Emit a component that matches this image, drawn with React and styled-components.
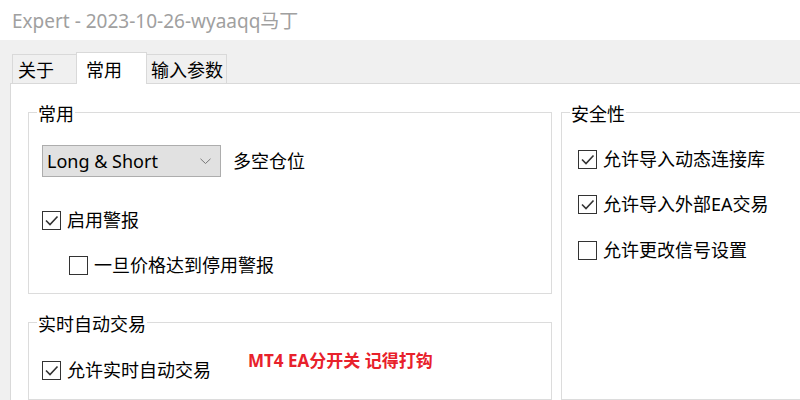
import React from "react";
import styled, { createGlobalStyle } from "styled-components";

const GlobalStyle = createGlobalStyle`
  html, body { margin: 0; padding: 0; background: #fff; }
  body {
    font-family: "Noto Sans", "Noto Sans CJK SC", sans-serif;
    color: #000;
  }
  * { box-sizing: border-box; }
`;

const Window = styled.div`
  width: 800px;
  height: 400px;
  overflow: hidden;
  display: flex;
  flex-direction: column;
  background: #fff;
`;

const TitleBar = styled.div`
  height: 40px;
  flex: none;
  display: flex;
  align-items: center;
  padding-left: 12px;
  font-size: 19px;
  color: #a0a0a0;
  font-family: "Noto Sans", "Noto Sans CJK SC", sans-serif;
`;

const Body = styled.div`
  flex: 1;
  display: flex;
  flex-direction: column;
  background: #f0f0f0;
  padding-left: 10px;
  min-height: 0;
`;

const TabStrip = styled.div`
  height: 43px;
  flex: none;
  display: flex;
  align-items: flex-end;
  padding-left: 2px;
  position: relative;
  z-index: 1;
`;

const Tab = styled.div`
  width: ${(p) => p.$w}px;
  height: ${(p) => (p.$active ? 32 : 29)}px;
  margin: 0 ${(p) => (p.$active ? -1 : 0)}px ${(p) => (p.$active ? -1 : 0)}px;
  background: ${(p) => (p.$active ? "#fff" : "#f0f0f0")};
  border: 1px solid #d9d9d9;
  border-bottom: none;
  display: flex;
  align-items: center;
  padding-left: ${(p) => p.$pl}px;
  font-size: 18px;
  line-height: 24px;
  font-family: "Noto Sans CJK SC", sans-serif;
  position: relative;
  z-index: ${(p) => (p.$active ? 2 : 1)};
`;

const Panel = styled.div`
  flex: 1;
  background: #fff;
  border-top: 1px solid #d9d9d9;
  border-left: 1px solid #d9d9d9;
  display: flex;
  gap: 9px;
  padding: 28px 0 0 17px;
  min-height: 0;
`;

const LeftColumn = styled.div`
  width: 524px;
  flex: none;
  display: flex;
  flex-direction: column;
  gap: 28px;
`;

const Group = styled.div`
  border: 1px solid #dcdcdc;
  display: flex;
  flex-direction: column;
  align-items: flex-start;
  height: ${(p) => (p.$h ? `${p.$h}px` : "auto")};
  flex: ${(p) => (p.$grow ? 1 : "none")};
  width: ${(p) => (p.$w ? `${p.$w}px` : "auto")};
  position: relative;
`;

const GroupTitle = styled.div`
  margin: -12px 0 0 8px;
  padding: 0 1px;
  background: #fff;
  font-size: 18px;
  line-height: 24px;
  font-family: "Noto Sans CJK SC", sans-serif;
`;

const GroupBody = styled.div`
  display: flex;
  flex-direction: column;
  align-items: flex-start;
  padding-left: ${(p) => p.$pl || 13}px;
`;

const ComboRow = styled.div`
  display: flex;
  align-items: center;
  gap: 12px;
  margin-top: 20px;
`;

const Combo = styled.div`
  width: 179px;
  height: 32px;
  background: #e1e1e1;
  border: 1px solid #adadad;
  display: flex;
  align-items: center;
  justify-content: space-between;
  padding: 0 9px 0 4px;
  font-size: 18px;
  font-family: "Noto Sans", sans-serif;
`;

const Label = styled.span`
  font-size: 18px;
  line-height: 24px;
  font-family: "Noto Sans", "Noto Sans CJK SC", sans-serif;
  white-space: nowrap;
`;

const CheckRow = styled.div`
  display: flex;
  align-items: center;
  gap: 6px;
  height: 24px;
  margin-top: ${(p) => p.$mt}px;
  margin-left: ${(p) => p.$ml || 0}px;
`;

const Box = styled.span`
  width: 19px;
  height: 19px;
  border: 1px solid #333;
  background: #fff;
  display: inline-flex;
  align-items: center;
  justify-content: center;
  flex: none;
`;

const Note = styled.div`
  position: absolute;
  left: 219px;
  top: 27px;
  font-size: 17px;
  line-height: 22px;
  font-weight: bold;
  color: #e8212b;
  font-family: "Noto Sans", "Noto Sans CJK SC", sans-serif;
  white-space: nowrap;
`;

const Chevron = () => (
  <svg width="11" height="7" viewBox="0 0 11 7">
    <polyline points="0.5,0.8 5.5,5.5 10.5,0.8" fill="none" stroke="#777" strokeWidth="1" />
  </svg>
);

const CheckBox = ({ checked, label, mt, ml }) => (
  <CheckRow $mt={mt} $ml={ml}>
    <Box>
      {checked && (
        <svg width="17" height="17" viewBox="0 0 17 17">
          <polyline points="3,8.5 7,12.5 14.5,4.5" fill="none" stroke="#333" strokeWidth="1.6" />
        </svg>
      )}
    </Box>
    <Label>{label}</Label>
  </CheckRow>
);

export default function App() {
  return (
    <>
      <GlobalStyle />
      <Window>
        <TitleBar>Expert - 2023-10-26-wyaaqq马丁</TitleBar>
        <Body>
          <TabStrip>
            <Tab $w={65} $pl={5}>关于</Tab>
            <Tab $w={71} $pl={9} $active>常用</Tab>
            <Tab $w={81} $pl={4}>输入参数</Tab>
          </TabStrip>
          <Panel>
            <LeftColumn>
              <Group $h={182}>
                <GroupTitle>常用</GroupTitle>
                <GroupBody>
                  <ComboRow>
                    <Combo>
                      <span>Long &amp; Short</span>
                      <Chevron />
                    </Combo>
                    <Label>多空仓位</Label>
                  </ComboRow>
                  <CheckBox checked label="启用警报" mt={31} />
                  <CheckBox label="一旦价格达到停用警报" mt={21} ml={27} />
                </GroupBody>
              </Group>
              <Group $grow>
                <GroupTitle>实时自动交易</GroupTitle>
                <GroupBody>
                  <CheckBox checked label="允许实时自动交易" mt={23} />
                </GroupBody>
                <Note>MT4 EA分开关 记得打钩</Note>
              </Group>
            </LeftColumn>
            <Group $w={300}>
              <GroupTitle>安全性</GroupTitle>
              <GroupBody $pl={16}>
                <CheckBox checked label="允许导入动态连接库" mt={22} />
                <CheckBox checked label="允许导入外部EA交易" mt={21} />
                <CheckBox label="允许更改信号设置" mt={22} />
              </GroupBody>
            </Group>
          </Panel>
        </Body>
      </Window>
    </>
  );
}
